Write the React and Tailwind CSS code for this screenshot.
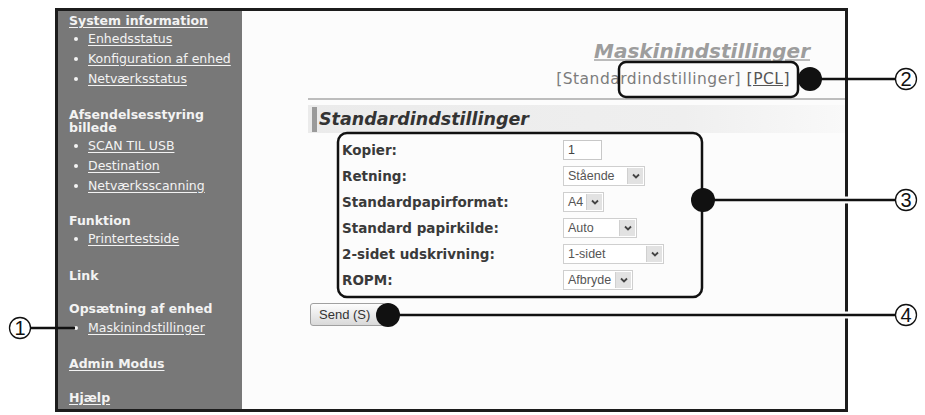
import React from "react";

const SideHead = ({ children, className = "" }) => (
  <div className={`font-bold leading-[16px] ${className}`}>{children}</div>
);

const SideItem = ({ children, className = "" }) => (
  <div className={`flex items-center h-[20px] ${className}`}>
    <span className="ml-[5px] mr-[10px] w-[4px] h-[4px] rounded-full bg-[#f4f4f4]" />
    <a href="#" className="underline underline-offset-2">
      {children}
    </a>
  </div>
);

const Chevron = () => (
  <svg width="10" height="8" viewBox="0 0 10 8">
    <path d="M2 2.5 L5 5.5 L8 2.5" fill="none" stroke="#444" strokeWidth="1.8" />
  </svg>
);

const Select = ({ value, width }) => (
  <div
    className="h-[20px] flex items-center border border-[#cfcfcf] bg-white"
    style={{ width }}
  >
    <span className="flex-1 pl-[4px] text-[12.5px] text-[#555]">{value}</span>
    <span className="m-[1px] w-[16px] h-[16px] flex items-center justify-center bg-[#e2e2e2] border-l border-[#d0d0d0]">
      <Chevron />
    </span>
  </div>
);

const rows = [
  { label: "Kopier:", input: true },
  { label: "Retning:", value: "Stående", width: 82 },
  { label: "Standardpapirformat:", value: "A4", width: 41 },
  { label: "Standard papirkilde:", value: "Auto", width: 74 },
  { label: "2-sidet udskrivning:", value: "1-sidet", width: 101 },
  { label: "ROPM:", value: "Afbryde", width: 70 },
];

const Callout = ({ x, y, n }) => (
  <g>
    <circle cx={x} cy={y} r="10.5" fill="white" stroke="#111" strokeWidth="1.3" />
    <text
      x={x}
      y={y + 7}
      textAnchor="middle"
      fontSize="20"
      fontFamily="Liberation Sans, Arial, sans-serif"
      fill="#111"
    >
      {n}
    </text>
  </g>
);

export default function App() {
  return (
    <div className="relative w-[925px] h-[415px] bg-white overflow-hidden font-['DejaVu_Sans',sans-serif]">
      <div className="ml-[55px] pt-[8px]">
        <div className="w-[793px] h-[404px] border-[3px] border-[#1c1c1c] flex">
          {/* sidebar */}
          <div className="w-[184px] bg-[#787878] text-[#f3f3f3] text-[12.5px] pl-[11px] pt-[2px]">
            <SideHead className="underline underline-offset-2">System information</SideHead>
            <SideItem>Enhedsstatus</SideItem>
            <SideItem>Konfiguration af enhed</SideItem>
            <SideItem>Netværksstatus</SideItem>
            <div className="mt-[19px] font-bold leading-[13px]">
              Afsendelsesstyring
              <br />
              billede
            </div>
            <SideItem className="mt-[2px]">SCAN TIL USB</SideItem>
            <SideItem>Destination</SideItem>
            <SideItem>Netværksscanning</SideItem>
            <SideHead className="mt-[17px]">Funktion</SideHead>
            <SideItem>Printertestside</SideItem>
            <SideHead className="mt-[19px]">Link</SideHead>
            <SideHead className="mt-[17px]">Opsætning af enhed</SideHead>
            <SideItem className="mt-[1px]">Maskinindstillinger</SideItem>
            <SideHead className="mt-[18px] underline underline-offset-2">Admin Modus</SideHead>
            <SideHead className="mt-[18px] underline underline-offset-2">Hjælp</SideHead>
          </div>

          {/* main */}
          <div className="flex-1 bg-[#fcfcfc] pt-[28px] pl-[66px]">
            <div className="text-right">
              <div className="pr-[35px] text-[20px] leading-[24px] font-bold italic text-[#9d9d9d] underline decoration-[#bbbbbb]">
                Maskinindstillinger
              </div>
              <div className="mt-[7px] pr-[55px] text-[15.5px] leading-[18px] tracking-[0.5px] text-[#7c7c7c]">
                [Standardindstillinger]{" "}
                <span className="underline text-[#555]">[PCL]</span>
              </div>
            </div>
            <div className="mt-[10px] h-[2px] bg-[#bdbdbd]" />

            <div className="mt-[5px] h-[28px] flex items-center bg-linear-to-r from-[#ebebeb] via-[#efefef] via-70% to-[#f9f9f9]">
              <span className="ml-[4px] w-[5px] h-[25px] bg-[#9a9a9a]" />
              <span className="ml-[2px] text-[17.5px] font-bold italic text-[#333]">
                Standardindstillinger
              </span>
            </div>

            <div className="mt-[4px] pl-[34px]">
              {rows.map((r) => (
                <div key={r.label} className="h-[26px] flex items-center">
                  <div className="w-[221px] text-[13.5px] font-bold text-[#3a3a3a]">
                    {r.label}
                  </div>
                  <div className="font-['Liberation_Sans',Arial,sans-serif]">
                    {r.input ? (
                      <div className="w-[39px] h-[20px] flex items-center pl-[4px] border border-[#c8c8c8] bg-white text-[12.5px] text-[#444]">
                        1
                      </div>
                    ) : (
                      <Select value={r.value} width={r.width} />
                    )}
                  </div>
                </div>
              ))}
            </div>

            <button className="mt-[10px] ml-[2px] w-[76px] h-[23px] rounded-[3px] border border-[#a0a0a0] bg-linear-to-b from-[#fdfdfd] to-[#d9d9d9] text-[13px] text-[#333] font-['Liberation_Sans',Arial,sans-serif] text-left pl-[8px]">
              Send (S)
            </button>
          </div>
        </div>
      </div>

      {/* callouts */}
      <svg className="absolute inset-0 pointer-events-none" width="925" height="415">
        <line x1="30" y1="328" x2="75" y2="328" stroke="#111" strokeWidth="2.5" />
        <Callout x={20} y={328} n="1" />

        <rect x="619" y="62" width="179" height="35" rx="7" fill="none" stroke="#111" strokeWidth="2.5" />
        <line x1="810" y1="79" x2="896" y2="79" stroke="#111" strokeWidth="2.5" />
        <circle cx="810" cy="79" r="12" fill="#111" />
        <Callout x={906} y={79} n="2" />

        <rect x="338" y="133" width="364" height="164" rx="9" fill="none" stroke="#111" strokeWidth="2.5" />
        <line x1="840" y1="200" x2="853" y2="200" stroke="white" strokeWidth="7" />
        <line x1="703" y1="200" x2="896" y2="200" stroke="#111" strokeWidth="2.5" />
        <circle cx="703" cy="200" r="12" fill="#111" />
        <Callout x={906} y={200} n="3" />

        <line x1="840" y1="315" x2="853" y2="315" stroke="white" strokeWidth="7" />
        <line x1="388" y1="315" x2="896" y2="315" stroke="#111" strokeWidth="2.5" />
        <circle cx="388" cy="315" r="12" fill="#111" />
        <Callout x={906} y={315} n="4" />
      </svg>
    </div>
  );
}
